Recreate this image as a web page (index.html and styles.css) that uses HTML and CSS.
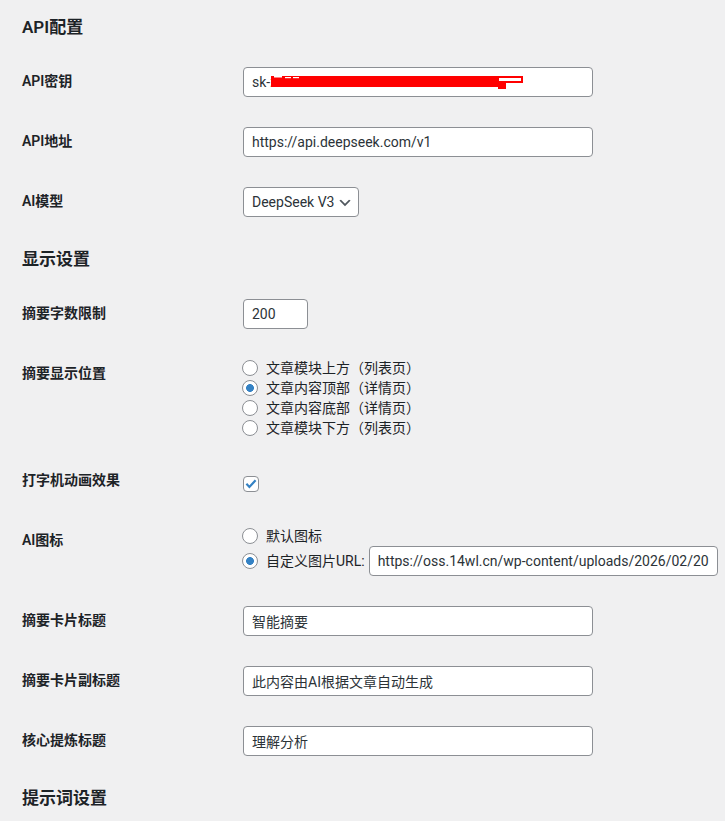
FILE: index.html
```html
<!DOCTYPE html>
<html lang="zh-CN">
<head>
  <meta charset="UTF-8" />
  <meta name="viewport" content="width=device-width, initial-scale=1.0" />
  <title>AI摘要设置</title>
  <link rel="stylesheet" href="styles.css">
</head>
<body>
  <div class="wrap">

    <!-- API配置 -->
    <h2>API配置</h2>
    <table class="form-table">
      <tr>
        <th>API密钥</th>
        <td>
          <span class="key-field">
            <input type="text" class="regular-text" value="sk-zz">
            <svg class="redact" width="350" height="30" viewBox="0 0 350 30">
              <rect x="28" y="9" width="234" height="11" fill="#ff0000"/>
              <rect x="255" y="14" width="8" height="8" fill="#ff0000"/>
              <rect x="31" y="9" width="8" height="1.5" fill="#fff"/>
              <rect x="42" y="10" width="6" height="1.2" fill="#fff"/>
              <rect x="50" y="10" width="6" height="1.2" fill="#fff"/>
              <rect x="255" y="10" width="24" height="5" fill="#fff" stroke="#ff0000" stroke-width="2"/>
            </svg>
          </span>
        </td>
      </tr>
      <tr>
        <th>API地址</th>
        <td><input type="text" class="regular-text" value="https://api.deepseek.com/v1"></td>
      </tr>
      <tr>
        <th>AI模型</th>
        <td>
          <span class="select-wrap">
            <select>
              <option>DeepSeek V3</option>
              <option>DeepSeek R1</option>
            </select>
            <svg class="chevron" width="16" height="16" viewBox="0 0 20 20"><path d="M5 6l5 5 5-5 2 1-7 7-7-7 2-1z" fill="#50575e"/></svg>
          </span>
        </td>
      </tr>
    </table>

    <!-- 显示设置 -->
    <h2>显示设置</h2>
    <table class="form-table">
      <tr>
        <th>摘要字数限制</th>
        <td><input type="number" class="small-text" value="200"></td>
      </tr>
      <tr>
        <th>摘要显示位置</th>
        <td class="tight">
          <fieldset class="choices">
            <label><input type="radio" name="pos"> 文章模块上方（列表页）</label>
            <label><input type="radio" name="pos" checked> 文章内容顶部（详情页）</label>
            <label><input type="radio" name="pos"> 文章内容底部（详情页）</label>
            <label><input type="radio" name="pos"> 文章模块下方（列表页）</label>
          </fieldset>
        </td>
      </tr>
      <tr>
        <th>打字机动画效果</th>
        <td>
          <span class="check">
            <input type="checkbox" checked>
            <svg class="tick" width="16" height="16" viewBox="0 0 16 16"><path d="M3.4 7.8 L6.4 10.9 L12.6 4.2" fill="none" stroke="#3582c4" stroke-width="2.2"/></svg>
          </span>
        </td>
      </tr>
      <tr>
        <th>AI图标</th>
        <td>
          <fieldset class="choices">
            <label><input type="radio" name="icon"> 默认图标</label>
            <label class="url-line"><input type="radio" name="icon" checked> 自定义图片URL: <input type="text" class="regular-text" value="https://oss.14wl.cn/wp-content/uploads/2026/02/20260214-ai-icon.png"></label>
          </fieldset>
        </td>
      </tr>
      <tr>
        <th>摘要卡片标题</th>
        <td><input type="text" class="regular-text" value="智能摘要"></td>
      </tr>
      <tr>
        <th>摘要卡片副标题</th>
        <td><input type="text" class="regular-text" value="此内容由AI根据文章自动生成"></td>
      </tr>
      <tr>
        <th>核心提炼标题</th>
        <td><input type="text" class="regular-text" value="理解分析"></td>
      </tr>
    </table>

    <!-- 提示词设置 -->
    <h2>提示词设置</h2>

  </div>
</body>
</html>
```

FILE: styles.css
```css
/* Page */
body {
  margin: 0;
  background: #f0f0f1;
  color: #1d2327;
  font-family: "Segoe UI", Roboto, "Noto Sans CJK SC", sans-serif;
  font-size: 14px;
  overflow-x: hidden;
}
.wrap {
  padding: 0 0 0 22px;
}
h2 {
  font-size: 17px;
  font-weight: 600;
  line-height: 22px;
  margin: 16px 0 14px;
}
/* Settings table */
.form-table {
  border-collapse: collapse;
  table-layout: fixed;
  width: 100%;
}
.form-table th {
  width: 200px;
  padding: 20px 10px 20px 0;
  text-align: left;
  vertical-align: top;
  font-weight: 600;
  line-height: 1.3;
}
.form-table td {
  padding: 15px 10px;
  vertical-align: top;
  line-height: 1.3;
}
.form-table td.tight {
  padding: 14px 10px 13px;
}
/* Inputs */
input[type="text"],
input[type="number"],
select {
  box-sizing: border-box;
  height: 30px;
  margin: 0 1px;
  padding: 0 8px;
  border: 1px solid #8c8f94;
  border-radius: 4px;
  background: #fff;
  color: #2c3338;
  font: inherit;
  font-size: 14px;
}
input[type="text"],
input[type="number"] {
  display: block;
}
input[type="number"] {
  -moz-appearance: textfield;
}
input[type="number"]::-webkit-inner-spin-button {
  -webkit-appearance: none;
}
.regular-text {
  width: 350px;
}
.small-text {
  width: 65px;
}
.key-field {
  display: block;
  position: relative;
  width: 352px;
}
.redact {
  position: absolute;
  top: 0;
  left: 1px;
}
/* Select */
.select-wrap {
  display: block;
  position: relative;
  width: 118px;
}
select {
  display: block;
  width: 116px;
  padding: 0 24px 0 8px;
  -webkit-appearance: none;
  appearance: none;
}
.chevron {
  position: absolute;
  top: 8px;
  right: 7px;
  pointer-events: none;
}
/* Radios */
.choices {
  margin: 0;
  padding: 0;
  border: 0;
}
.choices label {
  display: flex;
  align-items: center;
  height: 20px;
  white-space: nowrap;
}
.choices label.url-line {
  height: 30px;
}
.url-line input[type="text"] {
  width: 349px;
  margin-left: 4px;
  flex: none;
}
input[type="radio"],
input[type="checkbox"] {
  -webkit-appearance: none;
  appearance: none;
  box-sizing: border-box;
  width: 16px;
  height: 16px;
  margin: 0 8px 0 0;
  border: 1px solid #8c8f94;
  background: #fff;
  flex: none;
}
input[type="radio"] {
  border-radius: 50%;
}
input[type="radio"]:checked {
  background: radial-gradient(circle at center, #3582c4 0 3.6px, #fff 4.2px);
}
/* Checkbox */
.check {
  display: block;
  position: relative;
  width: 16px;
  height: 16px;
  margin: 10px 0 4px 1px;
}
input[type="checkbox"] {
  display: block;
  margin: 0;
  border-radius: 4px;
}
.tick {
  position: absolute;
  top: 0;
  left: 0;
  pointer-events: none;
}
```
